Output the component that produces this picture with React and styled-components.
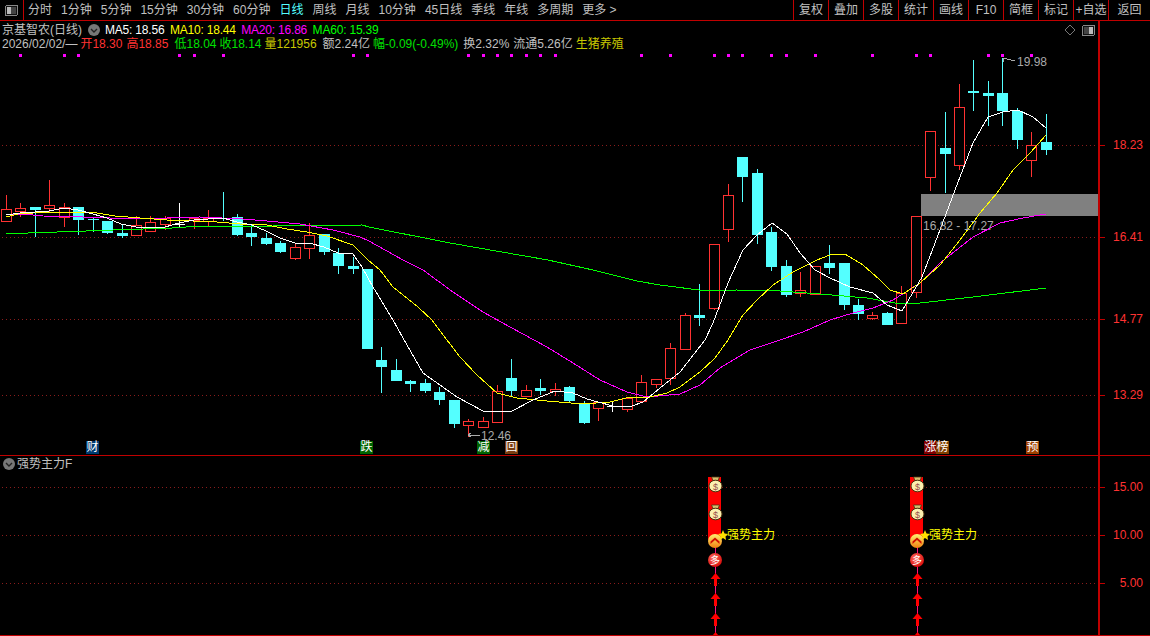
import React from 'react';
import styled, { createGlobalStyle } from 'styled-components';

const FONT = '"Liberation Sans", "Noto Sans CJK SC", sans-serif';
const RED_LINE = '#c00000';
const UP = '#ff3232';
const DOWN = '#54ffff';

const GlobalStyle = createGlobalStyle`
  html, body {
    margin: 0;
    background: #000;
    overflow: hidden;
  }
`;

const Page = styled.div`
  width: 1150px;
  height: 636px;
  display: flex;
  flex-direction: column;
  background: #000;
  color: #c0c0c0;
  font: 12px/14px ${FONT};
`;

const Toolbar = styled.div`
  height: 20px;
  flex: none;
  display: flex;
  align-items: center;
  border-bottom: 1px solid ${RED_LINE};
`;

const LayoutCell = styled.div`
  width: 23px;
  height: 20px;
  flex: none;
  display: flex;
  align-items: center;
  justify-content: center;
  border-right: 1px solid ${RED_LINE};
`;

const Tabs = styled.div`
  flex: 1;
  display: flex;
  gap: 9px;
  padding-left: 4px;
`;

const Tab = styled.span`
  color: ${(p) => (p.$active ? DOWN : '#c0c0c0')};
  white-space: nowrap;
`;

const Actions = styled.div`
  display: flex;
  height: 20px;
`;

const Action = styled.div`
  width: 35px;
  box-sizing: border-box;
  display: flex;
  align-items: center;
  justify-content: center;
  border-left: 1px solid ${RED_LINE};
  white-space: nowrap;
  &:last-child {
    width: 42px;
  }
`;

const Board = styled.div`
  flex: 1;
  display: grid;
  grid-template-columns: 1098px 52px;
  grid-template-rows: 435px 180px;
`;

const Pane = styled.div`
  position: relative;
  overflow: hidden;
  border-bottom: 1px solid ${RED_LINE};
`;

const Axis = styled.div`
  position: relative;
  border-left: 2px solid ${RED_LINE};
  border-bottom: 1px solid ${RED_LINE};
`;

const AxisMark = styled.div`
  position: absolute;
  left: 0;
  right: 7px;
  display: flex;
  align-items: center;
  justify-content: space-between;
  height: 14px;
  margin-top: -7px;
  color: ${UP};
  &::before {
    content: '';
    width: 5px;
    height: 1px;
    background: ${RED_LINE};
  }
`;

const Plot = styled.svg`
  position: absolute;
  inset: 0;
  display: block;
`;

const Head = styled.div`
  position: relative;
  display: flex;
  flex-direction: column;
  padding: 2px 3px 0 2px;
`;

const HeadRow = styled.div`
  display: flex;
  align-items: center;
  height: 14px;
  white-space: nowrap;
`;

const Title = styled.span`
  margin-right: 6px;
`;

const MaList = styled.div`
  display: flex;
  gap: 5.5px;
  margin-left: 5px;
  letter-spacing: -0.2px;
`;

const Ma = styled.span`
  color: ${(p) => p.$color};
`;

const Quote = styled.span`
  color: ${(p) => p.$color || '#c0c0c0'};
  margin-right: 3px;
  margin-left: ${(p) => p.$shift || 0}px;
`;

const CornerTools = styled.div`
  margin-left: auto;
  display: flex;
  align-items: center;
  gap: 6px;
`;

const SubHead = styled.div`
  position: relative;
  display: flex;
  align-items: center;
  gap: 2px;
  padding: 1px 0 0 3px;
  height: 14px;
`;

const Tag = styled.div`
  position: absolute;
  top: 420px;
  height: 13px;
  width: 13px;
  display: flex;
  align-items: center;
  justify-content: center;
  background: ${(p) => p.$bg};
  color: #fff;
  font-size: 12px;
  line-height: 13px;
`;

const PriceNote = styled.div`
  position: absolute;
  color: #aaa;
  white-space: nowrap;
`;

const SignalNote = styled.div`
  position: absolute;
  top: 72px;
  color: #ffff00;
  white-space: nowrap;
`;

const TABS = ['分时', '1分钟', '5分钟', '15分钟', '30分钟', '60分钟', '日线', '周线', '月线', '10分钟', '45日线', '季线', '年线', '多周期', '更多 >'];
const ACTIONS = ['复权', '叠加', '多股', '统计', '画线', 'F10', '简框', '标记', '+自选', '返回'];

// [wick top, body top, body bottom, wick bottom, kind]
const CANDLES = [
  [195, 209, 221, 222, 'r'], [203, 208, 211, 217, 'r'], [207, 207, 210, 237, 'c'], [180, 205, 208, 213, 'r'],
  [203, 207, 217, 227, 'r'], [207, 207, 220, 235, 'c'], [217, 219, 220, 232, 'c'], [221, 221, 233, 234, 'c'],
  [225, 233, 236, 238, 'c'], [216, 225, 235, 235, 'r'], [216, 222, 231, 231, 'r'], [216, 218, 224, 230, 'r'],
  [203, 224, 224, 227, 'w'], [218, 218, 220, 229, 'r'], [210, 218, 221, 226, 'r'], [192, 218, 219, 221, 'c'],
  [214, 217, 235, 236, 'c'], [225, 233, 237, 246, 'c'], [233, 238, 244, 245, 'c'], [241, 243, 252, 253, 'c'],
  [243, 247, 258, 260, 'r'], [223, 235, 248, 259, 'r'], [234, 234, 252, 255, 'c'], [248, 253, 266, 274, 'c'],
  [257, 266, 269, 274, 'c'], [269, 269, 349, 349, 'c'], [347, 360, 367, 393, 'c'], [359, 370, 381, 381, 'c'],
  [380, 381, 384, 392, 'c'], [379, 383, 391, 393, 'c'], [387, 392, 400, 405, 'c'], [400, 400, 424, 428, 'c'],
  [419, 421, 425, 437, 'r'], [417, 421, 427, 427, 'r'], [385, 391, 422, 422, 'r'], [359, 378, 391, 397, 'c'],
  [385, 390, 396, 396, 'r'], [379, 388, 391, 395, 'c'], [383, 389, 391, 396, 'r'], [386, 387, 401, 403, 'c'],
  [401, 404, 423, 424, 'c'], [402, 402, 408, 421, 'r'], [401, 406, 406, 412, 'w'], [398, 398, 409, 412, 'r'],
  [375, 382, 401, 401, 'r'], [379, 379, 384, 388, 'r'], [343, 348, 378, 385, 'r'], [313, 315, 349, 349, 'r'],
  [284, 315, 318, 326, 'c'], [244, 244, 308, 310, 'r'], [184, 195, 229, 242, 'r'], [157, 157, 177, 202, 'c'],
  [169, 173, 235, 244, 'c'], [227, 232, 267, 271, 'c'], [260, 266, 295, 297, 'c'], [272, 290, 293, 297, 'r'],
  [266, 266, 294, 294, 'r'], [245, 263, 268, 274, 'c'], [263, 263, 305, 310, 'c'], [299, 305, 314, 320, 'c'],
  [312, 315, 318, 320, 'r'], [312, 313, 325, 325, 'c'], [286, 293, 323, 323, 'r'], [216, 216, 292, 298, 'r'],
  [131, 131, 177, 191, 'r'], [112, 148, 154, 193, 'c'], [84, 107, 165, 170, 'r'], [60, 91, 93, 111, 'c'],
  [81, 93, 96, 126, 'c'], [58, 93, 111, 126, 'c'], [108, 111, 140, 149, 'c'], [132, 145, 160, 177, 'r'],
  [114, 142, 150, 155, 'c'],
];

const candleX = (i) => Math.round(6 + 14.44 * i);

const MA_DOTS = [1, 4, 5, 12, 13, 15, 24, 25, 32, 33, 34, 35, 36, 37, 38, 44, 46, 49, 50, 51, 53, 54, 56, 60, 63, 64, 68, 69, 71];

const MA5 = '6,215 20,213 35,212 49,211 64,208 78,210 93,214 107,218 121,224 136,227 150,227 165,227 179,223 194,220 208,219 223,218 237,222 252,225 266,231 280,238 295,243 309,243 324,247 338,253 353,254 362,267 373,287 393,320 403,338 423,373 440,385 457,397 483,411 512,411 533,400 555,391 573,393 587,399 613,406 632,406 643,402 660,388 680,372 705,340 713,323 728,283 743,250 757,235 772,223 787,234 800,253 815,270 830,278 850,287 873,293 887,305 902,311 922,277 940,230 955,190 973,143 988,117 1003,112 1018,110 1033,117 1046,128';
const MA10 = '6,217 18,214 33,213 57,212 83,212 97,213 115,216 140,218 167,220 193,221 217,222 240,224 267,225 287,229 307,232 327,236 353,245 368,260 380,270 393,287 418,307 432,320 447,340 460,357 477,375 497,393 517,398 547,401 583,404 610,402 630,397 650,397 667,393 680,387 700,372 715,358 728,340 743,315 757,300 773,285 793,272 817,260 830,255 845,254 863,265 880,280 890,290 903,294 920,283 940,265 960,240 980,213 997,193 1013,170 1030,153 1046,135';
const MA20 = '6,214 33,215 43,216 83,217 110,218 140,219 167,218 200,217 243,219 267,221 300,224 333,230 360,237 369,241 403,260 423,270 453,292 483,312 510,327 547,347 573,363 600,380 627,392 647,397 680,394 700,385 720,368 750,350 780,340 803,332 830,320 853,313 873,308 893,300 920,283 940,263 973,237 1000,223 1023,218 1046,214';
const MA60 = '6,234 28,233 57,232 86,231 113,230 143,229 172,228 201,226 230,226 273,226 362,225 369,227 450,243 548,260 593,270 637,281 660,285 707,291 736,290 780,291 820,294 867,298 895,303 920,303 973,297 1046,288';

const GRID_Y = [145, 237, 319, 395];
const SUB_GRID_Y = [487, 535, 583];
const PRICES = [
  { label: '18.23', y: 145 },
  { label: '16.41', y: 237 },
  { label: '14.77', y: 319 },
  { label: '13.29', y: 395 },
];
const SUB_PRICES = [
  { label: '15.00', y: 487 },
  { label: '10.00', y: 535 },
  { label: '5.00', y: 583 },
];
const TAGS = [
  { text: '财', x: 86, bg: '#003a70' },
  { text: '跌', x: 360, bg: '#006400' },
  { text: '减', x: 477, bg: '#006400' },
  { text: '回', x: 505, bg: '#7a3d10' },
  { text: '涨', x: 924, bg: '#800000' },
  { text: '榜', x: 936, bg: '#803f00' },
  { text: '预', x: 1026, bg: '#a04000' },
];
const SIGNAL_X = [715, 917];

const Chevron = () => (
  <svg width="12" height="12" viewBox="0 0 12 12">
    <circle cx="6" cy="6" r="6" fill="#777" />
    <path d="M3 5l3 3 3-3" fill="none" stroke="#222" strokeWidth="1.4" />
  </svg>
);

const LayoutIcon = ({ lit }) => (
  <svg width="13" height="11" viewBox="0 0 13 11" shapeRendering="crispEdges">
    <rect x="0.5" y="0.5" width="12" height="10" rx="1.5" fill="#111" stroke="#888" />
    <rect x={lit === 'left' ? 2 : 7} y="2" width="4" height="7" fill="#bbb" />
    <rect x={lit === 'left' ? 6 : 2} y="2" width="5" height="7" fill="#444" />
  </svg>
);

const Candle = ({ i, data }) => {
  const [wickTop, top, bottom, wickBottom, kind] = data;
  const x = candleX(i);
  const color = kind === 'r' ? UP : kind === 'c' ? DOWN : '#fff';
  const wick = <rect x={x} y={wickTop} width="1" height={wickBottom - wickTop} fill={color} />;
  if (kind === 'w') {
    return (
      <g>
        {wick}
        <rect x={x - 5} y={top} width="11" height="1" fill={color} />
      </g>
    );
  }
  return (
    <g>
      {wick}
      {kind === 'r' ? (
        <rect x={x - 5 + 0.5} y={top + 0.5} width="10" height={bottom - top} fill="#000" stroke={color} />
      ) : (
        <rect x={x - 5} y={top} width="11" height={Math.max(bottom - top, 1)} fill={color} />
      )}
    </g>
  );
};

const MaLine = ({ points, color }) => (
  <polyline points={points} fill="none" stroke={color} strokeWidth="1" />
);

const GridLine = ({ y }) => (
  <line x1="2" x2="1098" y1={y + 0.5} y2={y + 0.5} stroke="#8a1c1c" strokeDasharray="1 3" />
);

const MoneyBag = ({ x, y }) => (
  <g>
    <path d={`M${x - 3.5} ${y - 8}h8l-1.5 3.5h-5z`} fill="#d8c070" stroke="#4a3410" strokeWidth="0.8" />
    <ellipse cx={x + 0.5} cy={y + 1} rx="6.5" ry="5.8" fill="#fbf0b0" stroke="#4a3410" />
    <text x={x + 0.5} y={y + 4.5} textAnchor="middle" fontSize="9" fill="#96504a" fontFamily={FONT}>
      $
    </text>
  </g>
);

const Signal = ({ x }) => (
  <g>
    <rect x={x - 7} y="477" width="13" height="63" fill="#ff0000" />
    <rect x={x} y="540" width="1" height="95" fill="#ff1080" />
    <MoneyBag x={x} y={485} />
    <MoneyBag x={x} y={513} />
    <circle cx={x} cy="541" r="7" fill="url(#goldBall)" />
    <path d={`M${x - 4.5} 541.5l4.5-4 4.5 4v2.5l-4.5-4-4.5 4z`} fill="#d01000" />
    <polygon
      points={`${x + 8},530 ${x + 9.5},533.5 ${x + 13},534 ${x + 10.5},536.5 ${x + 11},540 ${x + 8},538 ${x + 5},540 ${x + 5.5},536.5 ${x + 3},534 ${x + 6.5},533.5`}
      fill="#ffe000"
    />
    <circle cx={x} cy="560" r="7" fill="url(#redBall)" />
    <text x={x} y="564" textAnchor="middle" fontSize="10" fill="#fff" fontFamily={FONT}>
      多
    </text>
    {[573, 593, 613, 632].map((y) => (
      <g key={y}>
        <polygon points={`${x + 0.5},${y} ${x + 5.5},${y + 6} ${x - 4.5},${y + 6}`} fill="#ff0000" />
        <rect x={x - 1} y={y + 6} width="3" height="7" fill="#ff0000" />
      </g>
    ))}
  </g>
);

const MainPlot = () => (
  <Plot width="1098" height="434" viewBox="0 21 1098 434" shapeRendering="crispEdges">
    {GRID_Y.map((y) => (
      <GridLine key={y} y={y} />
    ))}
    {MA_DOTS.map((i) => (
      <rect key={i} x={candleX(i) - 1} y="54" width="3" height="3" fill="#ff00ff" />
    ))}
    {CANDLES.map((c, i) => (
      <Candle key={i} i={i} data={c} />
    ))}
    <rect x="921" y="194" width="177" height="22" fill="#808080" />
    <MaLine points={MA60} color="#00ff00" />
    <MaLine points={MA20} color="#ff00ff" />
    <MaLine points={MA10} color="#ffff00" />
    <MaLine points={MA5} color="#ffffff" />
    <path d="M1003 58l12 3M1003 58l4 0M1003 58l1 4" fill="none" stroke="#aaa" />
    <path d="M468 435h12M468 435l3-2M468 435l3 2" fill="none" stroke="#aaa" />
  </Plot>
);

const SubPlot = () => (
  <Plot width="1098" height="179" viewBox="0 456 1098 179">
    <defs>
      <linearGradient id="goldBall" x1="0" y1="0" x2="0" y2="1">
        <stop offset="0" stopColor="#fff070" />
        <stop offset="1" stopColor="#f08010" />
      </linearGradient>
      <radialGradient id="redBall" cx="0.4" cy="0.35" r="0.7">
        <stop offset="0" stopColor="#ff7060" />
        <stop offset="1" stopColor="#d80808" />
      </radialGradient>
    </defs>
    {SUB_GRID_Y.map((y) => (
      <GridLine key={y} y={y} />
    ))}
    {SIGNAL_X.map((x) => (
      <Signal key={x} x={x} />
    ))}
  </Plot>
);

const App = () => (
  <Page>
    <GlobalStyle />
    <Toolbar>
      <LayoutCell>
        <LayoutIcon lit="left" />
      </LayoutCell>
      <Tabs>
        {TABS.map((t) => (
          <Tab key={t} $active={t === '日线'}>
            {t}
          </Tab>
        ))}
      </Tabs>
      <Actions>
        {ACTIONS.map((a) => (
          <Action key={a}>{a}</Action>
        ))}
      </Actions>
    </Toolbar>
    <Board>
      <Pane>
        <MainPlot />
        <Head>
          <HeadRow>
            <Title>京基智农(日线)</Title>
            <Chevron />
            <MaList>
              <Ma $color="#ffffff">MA5: 18.56</Ma>
              <Ma $color="#ffff00">MA10: 18.44</Ma>
              <Ma $color="#ff00ff">MA20: 16.86</Ma>
              <Ma $color="#00ff00">MA60: 15.39</Ma>
            </MaList>
            <CornerTools>
              <svg width="12" height="12" viewBox="0 0 12 12">
                <path d="M6 1l5 5-5 5-5-5z" fill="none" stroke="#777" />
              </svg>
              <LayoutIcon lit="right" />
            </CornerTools>
          </HeadRow>
          <HeadRow>
            <Quote>2026/02/02/—</Quote>
            <Quote $color={UP}>开18.30</Quote>
            <Quote $color={UP} $shift={1}>高18.85</Quote>
            <Quote $color="#00e000" $shift={3}>低18.04</Quote>
            <Quote $color="#00e000">收18.14</Quote>
            <Quote $color="#c8c800">量121956</Quote>
            <Quote $shift={3}>额2.24亿</Quote>
            <Quote $color="#00e000">幅-0.09(-0.49%)</Quote>
            <Quote $shift={2}>换2.32%</Quote>
            <Quote $shift={1}>流通5.26亿</Quote>
            <Quote $color="#c8c800">生猪养殖</Quote>
          </HeadRow>
        </Head>
        <PriceNote style={{ left: 1017, top: 34 }}>19.98</PriceNote>
        <PriceNote style={{ left: 481, top: 408 }}>12.46</PriceNote>
        <PriceNote style={{ left: 923, top: 198 }}>16.82 - 17.27</PriceNote>
        {TAGS.map((t) => (
          <Tag key={t.x} $bg={t.bg} style={{ left: t.x }}>
            {t.text}
          </Tag>
        ))}
      </Pane>
      <Axis>
        {PRICES.map((p) => (
          <AxisMark key={p.y} style={{ top: p.y - 21 }}>
            {p.label}
          </AxisMark>
        ))}
      </Axis>
      <Pane>
        <SubPlot />
        <SubHead>
          <Chevron />
          强势主力F
        </SubHead>
        {SIGNAL_X.map((x) => (
          <SignalNote key={x} style={{ left: x + 12 }}>
            强势主力
          </SignalNote>
        ))}
      </Pane>
      <Axis>
        {SUB_PRICES.map((p) => (
          <AxisMark key={p.y} style={{ top: p.y - 456 }}>
            {p.label}
          </AxisMark>
        ))}
      </Axis>
    </Board>
  </Page>
);

export default App;
